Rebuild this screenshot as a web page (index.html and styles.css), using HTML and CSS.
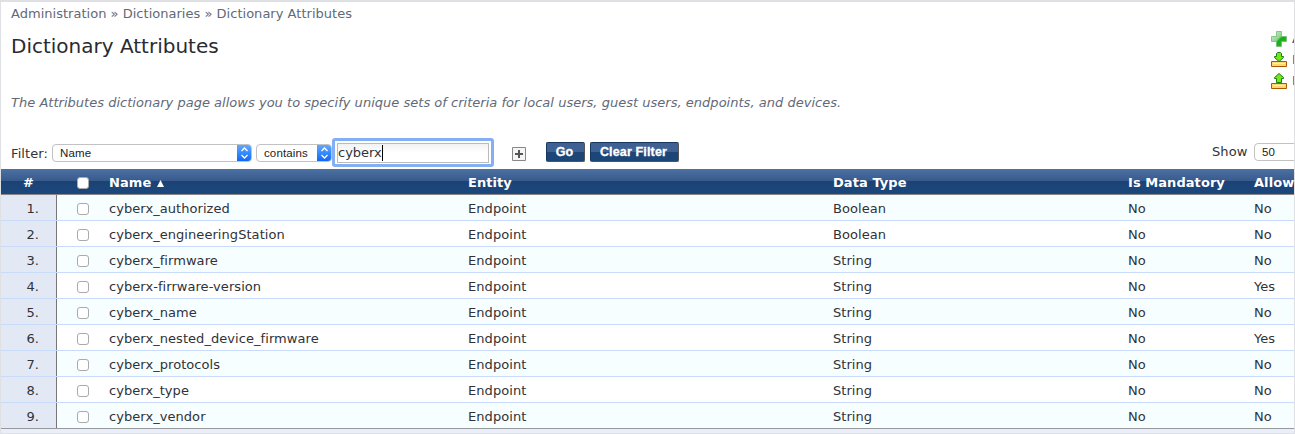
FILE: index.html
```
<!DOCTYPE html>
<html lang="en">
<head>
<meta charset="utf-8">
<title>Dictionary Attributes</title>
<link rel="stylesheet" href="styles.css">
</head>
<body>
<main class="page">
  <nav class="crumbs">Administration » Dictionaries » Dictionary Attributes</nav>
  <header class="heading">
    <h1>Dictionary Attributes</h1>
    <ul class="actions">
      <li><svg width="16" height="16" viewBox="0 0 16 16"><defs><linearGradient id="g" x1="0" y1="0" x2="1" y2="1"><stop offset="0" stop-color="#d5f3d5"/><stop offset=".45" stop-color="#8fd48f"/><stop offset=".55" stop-color="#16ad16"/><stop offset="1" stop-color="#28bf18"/></linearGradient></defs><path d="M5.500.5h5v5h5v5h-5v5h-5v-5h-5v-5h5z" fill="url(#g)" stroke="#79b879" stroke-width=".8"/></svg><a>Add</a></li>
      <li><svg width="16" height="16" viewBox="0 0 16 16"><path d="M.5 9.500h15v5H.5z" fill="#ffd675" stroke="#a75a00"/><path d="M2 11.500h12" stroke="#fff0a8"/><path d="M5.500 1.500 6.500.5h3l1 1v3h2v1L8 9.500 3.500 5.500v-1h2z" fill="#78e517" stroke="#138313"/></svg><a>Import</a></li>
      <li><svg width="16" height="16" viewBox="0 0 16 16"><path d="M.5 10.500h15v5H.5z" fill="#ffd675" stroke="#a75a00"/><path d="M2 12.500h12" stroke="#fff0a8"/><path d="M8 .5 12.500 4.500v1h-2v4h-5v-4h-2v-1z" fill="#78e517" stroke="#138313"/></svg><a>Export</a></li>
    </ul>
  </header>
  <p class="intro">The Attributes dictionary page allows you to specify unique sets of criteria for local users, guest users, endpoints, and devices.</p>
  <section class="filters">
    <span class="label">Filter:</span>
    <div class="select field"><span>Name</span><i><svg width="15" height="18" viewBox="0 0 15 18"><path d="m4.500 7 3-3 3 3M4.500 11l3 3 3-3"/></svg></i></div>
    <div class="select operator"><span>contains</span><i><svg width="15" height="18" viewBox="0 0 15 18"><path d="m4.500 7 3-3 3 3M4.500 11l3 3 3-3"/></svg></i></div>
    <div class="search"><div class="value">cyberx<b class="caret"></b></div></div>
    <svg class="plus" width="14" height="14" viewBox="0 0 14 14"><path d="M.5.5h13v13H.5z" fill="#f5f5f5" stroke="#888"/><path d="M3 7h8M7 3v8" stroke="#555" stroke-width="2"/></svg>
    <button class="button go">Go</button>
    <button class="button clear">Clear Filter</button>
    <span class="show">Show</span>
    <div class="select count"><span>50</span></div>
  </section>
  <div class="table">
    <div class="row head"><span class="num">#</span><span class="check"><i></i></span><span>Name <svg class="sort" width="7" height="7" viewBox="0 0 7 7"><path d="M3.500 0 7 7H0z" fill="#fff"/></svg></span><span>Entity</span><span>Data Type</span><span>Is Mandatory</span><span>Allow Multiple</span></div>
    <div class="row"><span class="num">1.</span><span class="check"><i></i></span><span>cyberx_authorized</span><span>Endpoint</span><span>Boolean</span><span>No</span><span>No</span></div>
    <div class="row"><span class="num">2.</span><span class="check"><i></i></span><span>cyberx_engineeringStation</span><span>Endpoint</span><span>Boolean</span><span>No</span><span>No</span></div>
    <div class="row"><span class="num">3.</span><span class="check"><i></i></span><span>cyberx_firmware</span><span>Endpoint</span><span>String</span><span>No</span><span>No</span></div>
    <div class="row"><span class="num">4.</span><span class="check"><i></i></span><span>cyberx-firrware-version</span><span>Endpoint</span><span>String</span><span>No</span><span>Yes</span></div>
    <div class="row"><span class="num">5.</span><span class="check"><i></i></span><span>cyberx_name</span><span>Endpoint</span><span>String</span><span>No</span><span>No</span></div>
    <div class="row"><span class="num">6.</span><span class="check"><i></i></span><span>cyberx_nested_device_firmware</span><span>Endpoint</span><span>String</span><span>No</span><span>Yes</span></div>
    <div class="row"><span class="num">7.</span><span class="check"><i></i></span><span>cyberx_protocols</span><span>Endpoint</span><span>String</span><span>No</span><span>No</span></div>
    <div class="row"><span class="num">8.</span><span class="check"><i></i></span><span>cyberx_type</span><span>Endpoint</span><span>String</span><span>No</span><span>No</span></div>
    <div class="row"><span class="num">9.</span><span class="check"><i></i></span><span>cyberx_vendor</span><span>Endpoint</span><span>String</span><span>No</span><span>No</span></div>
  </div>
</main>
</body>
</html>
```
FILE: styles.css
```
* { box-sizing: border-box; }
body { margin: 0; font-family: "DejaVu Sans", Verdana, sans-serif; font-size: 13px; color: #303238; }
.page { width: 1295px; height: 434px; overflow: hidden; border: 1px solid #dfe0e4; border-top-width: 2px; background: #fff; }
.crumbs { height: 24px; padding-left: 10px; line-height: 24px; font-size: 13px; letter-spacing: .02px; color: #626978; }
.heading { display: flex; justify-content: space-between; height: 66px; }
h1 { margin: 0; padding: 5px 0 0 10px; font-size: 20px; line-height: 30px; font-weight: 400; color: #292b30; }
.actions { width: 23px; margin: 0; padding: 5px 0 0; list-style: none; }
.actions li { display: flex; gap: 5px; height: 21px; width: 23px; overflow: hidden; }
.actions svg { flex: none; }
.actions a { color: #1647a0; line-height: 16px; }
.intro { height: 46px; margin: 0; padding-left: 10px; line-height: 22px; font-size: 13px; letter-spacing: .02px; font-style: italic; color: #626978; white-space: nowrap; }
.filters { display: flex; height: 31px; padding-left: 10px; align-items: flex-start; }
.label { width: 41px; line-height: 32px; white-space: nowrap; letter-spacing: .1px; }
.select { display: flex; justify-content: space-between; height: 18px; margin-top: 6px; border: 1px solid #c2c2c2; border-radius: 4px; overflow: hidden; font: 11.5px/17px "Liberation Sans", Arial, sans-serif; letter-spacing: .12px; color: #222; background: #fff; padding-left: 7px; }
.select i { width: 15px; margin: -1px; background: linear-gradient(#65adff, #0b65f5); }
.select i path { fill: none; stroke: #fff; stroke-width: 1.3; }
.field { width: 200px; }
.operator { width: 76px; margin-left: 4px; }
.search { width: 162px; height: 29px; border: 3px solid #85aff5; border-radius: 3px; padding: 2px; }
.value { display: flex; height: 20px; width: 152px; border: 1px solid #bbb; line-height: 18px; background: linear-gradient(#f2f2f2, #fff 50%); }
.caret { width: 1px; height: 16px; margin-top: 1px; background: #000; }
.plus { margin: 9px 0 0 18px; }
.button { height: 20px; margin: 4px 0 0; padding: 0; border: 1px solid #17375e; border-right-color: #555; border-bottom-color: #555; border-radius: 2px; color: #fff; background: linear-gradient(#3e6093 0 50%, #1c4578 50%); font: bold 12.5px/17px "Liberation Sans", Arial, sans-serif; letter-spacing: .15px; -webkit-text-stroke: .3px #fff; }
.go { width: 39px; margin-left: 20px; padding-right: 2px; }
.clear { width: 89px; margin-left: 5px; padding-right: 2px; }
.show { margin-left: auto; width: 42px; line-height: 28px; letter-spacing: .1px; }
.count { width: 50px; margin: 5px -10px 0 0; }
.row { display: grid; grid-template-columns: 56px 52px 359px 365px 295px 126px 140px; height: 26px; border-bottom: 1px solid #c8dbfa; line-height: 28px; white-space: nowrap; letter-spacing: .06px; background: #fff; }
.row > span { height: 25px; }
.row:nth-child(even) { background: #f7feff; }
.row:last-child { border-bottom-color: #999; }
.num { text-align: right; padding-right: 17px; border-right: 1px solid #777; background: #e3e8f5; }
.check { padding: 8px 0 0 20px; }
.check i { display: block; width: 12px; height: 12px; border: 1px solid #aaa; border-radius: 3px; background: #fff; }
.row.head { color: #fff; font-weight: 700; background: linear-gradient(#4c71a3, #38598c 48%, #1b4274 50%, #1c487e); border-bottom-color: #888; }
.head .num { background: none; border-color: transparent; padding-right: 22px; }
.sort { margin-left: 1px; }
.table { height: 264px; background: #e8effb; }
```
